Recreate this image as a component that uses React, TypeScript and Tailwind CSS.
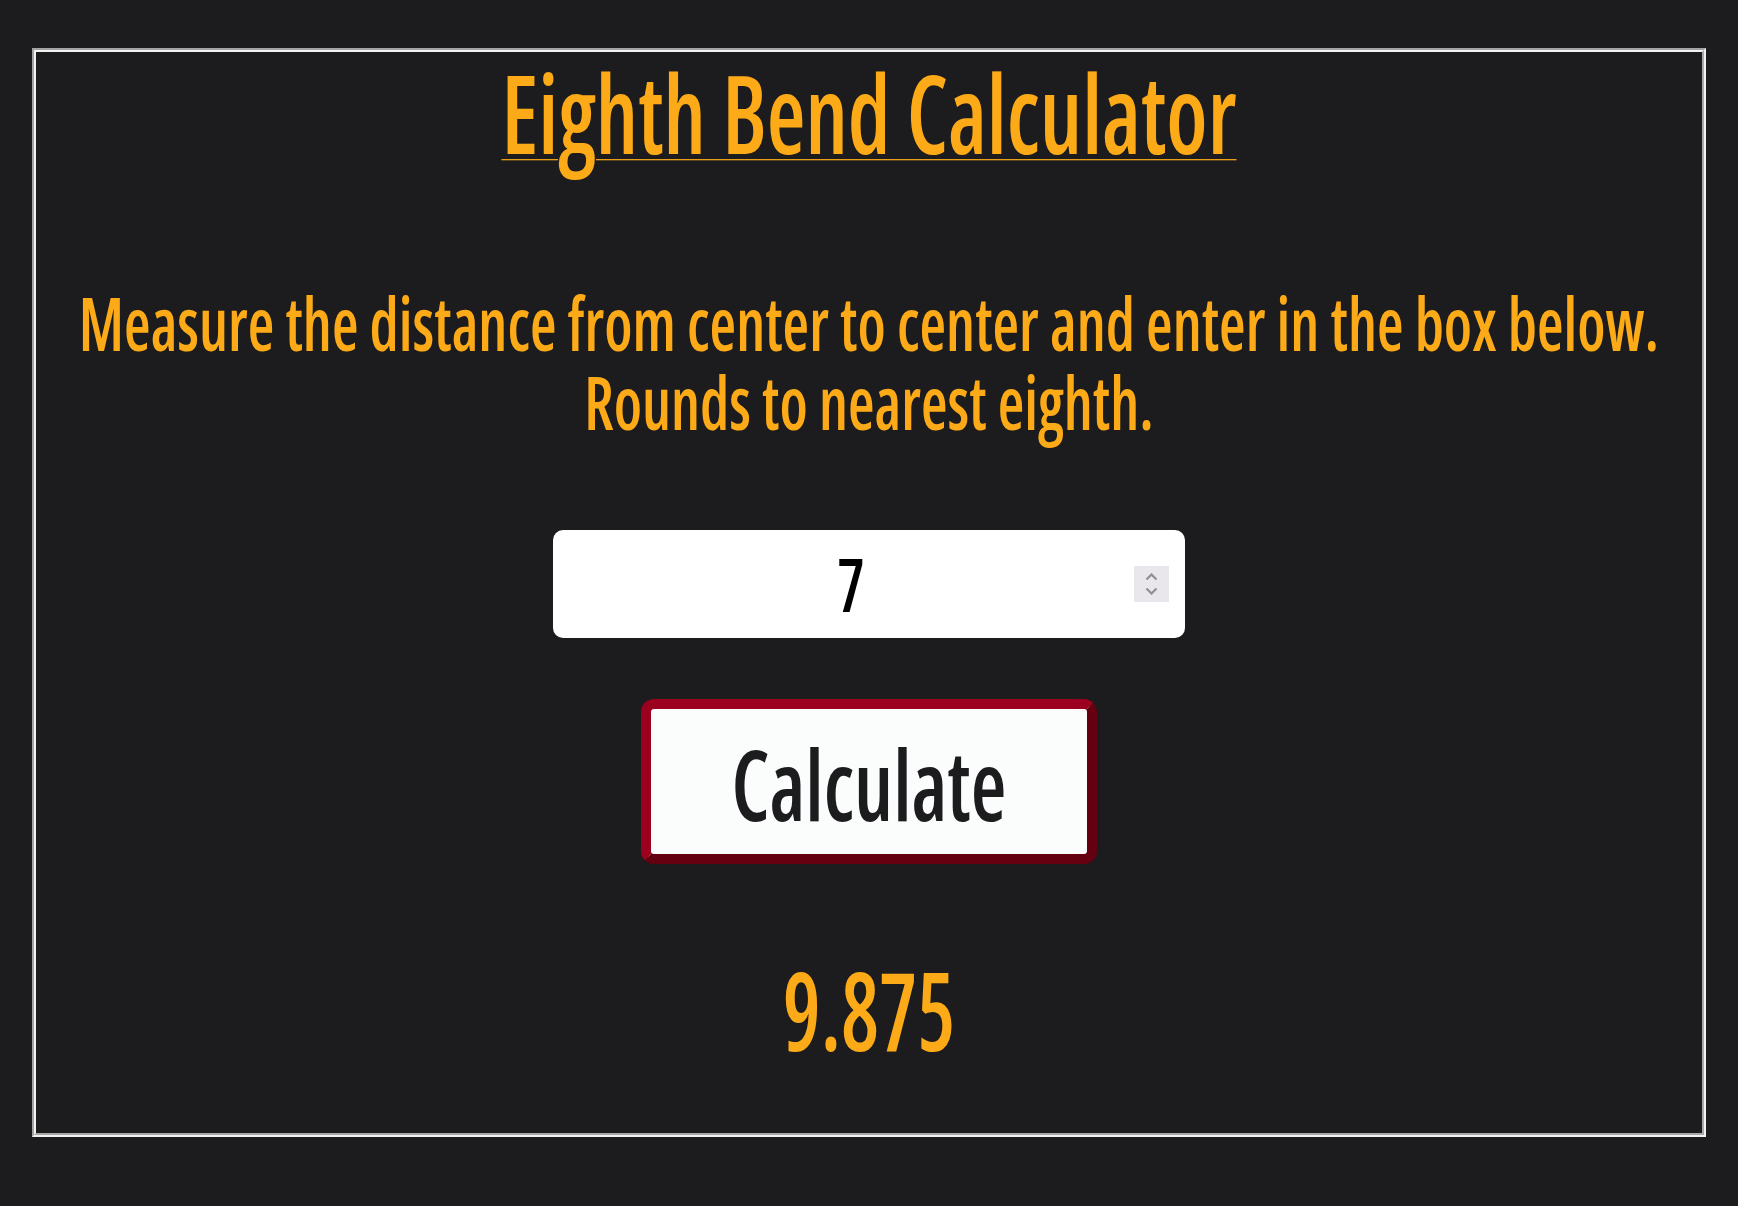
import React, { useState } from 'react';

const roundToEighth = (n: number) => Math.round(n * 8) / 8;

export default function App() {
  const [distance, setDistance] = useState('7');
  const [result, setResult] = useState(roundToEighth(7 * 1.414));

  const calculate = () => {
    const d = parseFloat(distance);
    if (!isNaN(d)) setResult(roundToEighth(d * 1.414));
  };

  const step = (dir: number) => {
    const d = parseFloat(distance) || 0;
    setDistance(String(d + dir));
  };

  return (
    <div className="min-h-screen bg-[#1c1c1e] px-8 pt-12 pb-[70px] font-['Open_Sans',sans-serif] font-stretch-condensed font-semibold">
      {/* groove frame */}
      <div className="border-2 border-t-[#a3a3a3] border-l-[#a3a3a3] border-r-[#f2f2f2] border-b-[#f2f2f2]">
        <div className="flex flex-col items-center border-2 border-t-[#f2f2f2] border-l-[#f2f2f2] border-r-[#a8a8a8] border-b-[#a8a8a8] pt-4 pb-[81px]">
          <h1 className="scale-y-[1.21] text-[89px] leading-none text-[#fcaa17] underline decoration-1 underline-offset-4">
            Eighth Bend Calculator
          </h1>

          <div className="mt-[140px] flex scale-y-[1.21] flex-col items-center text-center text-[61px] leading-[65.3px] text-[#fcaa17]">
            <p>Measure the distance from center to center and enter in the box below.</p>
            <p>Rounds to nearest eighth.</p>
          </div>

          <div className="relative mt-[102px] flex h-[108px] w-[632px] items-center rounded-[10px] bg-white">
            <input
              type="number"
              value={distance}
              onChange={(e) => setDistance(e.target.value)}
              className="h-[89px] w-full scale-y-[1.21] bg-transparent pr-[36px] text-center text-[61px] text-black outline-none [appearance:textfield] [&::-webkit-inner-spin-button]:appearance-none [&::-webkit-outer-spin-button]:appearance-none"
            />
            <div className="absolute right-[16px] top-[36px] flex h-[36px] w-[35px] flex-col items-center justify-center bg-[#e9e7ec]">
              <button onClick={() => step(1)} className="flex h-[14px] w-full items-center justify-center">
                <svg width="13" height="8" viewBox="0 0 13 8" fill="none">
                  <path d="M1.5 6.5L6.5 1.5L11.5 6.5" stroke="#8f8d9a" strokeWidth="2.2" />
                </svg>
              </button>
              <button onClick={() => step(-1)} className="flex h-[14px] w-full items-center justify-center">
                <svg width="13" height="8" viewBox="0 0 13 8" fill="none">
                  <path d="M1.5 1.5L6.5 6.5L11.5 1.5" stroke="#8f8d9a" strokeWidth="2.2" />
                </svg>
              </button>
            </div>
          </div>

          <button
            onClick={calculate}
            className="mt-[61px] flex h-[165px] w-[456px] items-center justify-center rounded-[13px] border-[10px] border-t-[#9b001e] border-l-[#9b001e] border-r-[#650010] border-b-[#650010] bg-[#fbfdfd] pt-1"
          >
            <span className="inline-block scale-y-[1.2] text-[82px] leading-none text-[#1c1c1e]">Calculate</span>
          </button>

          <div className="mt-[103px] scale-y-[1.28] text-[85px] leading-none text-[#fcaa17]">{result}</div>
        </div>
      </div>
    </div>
  );
}
